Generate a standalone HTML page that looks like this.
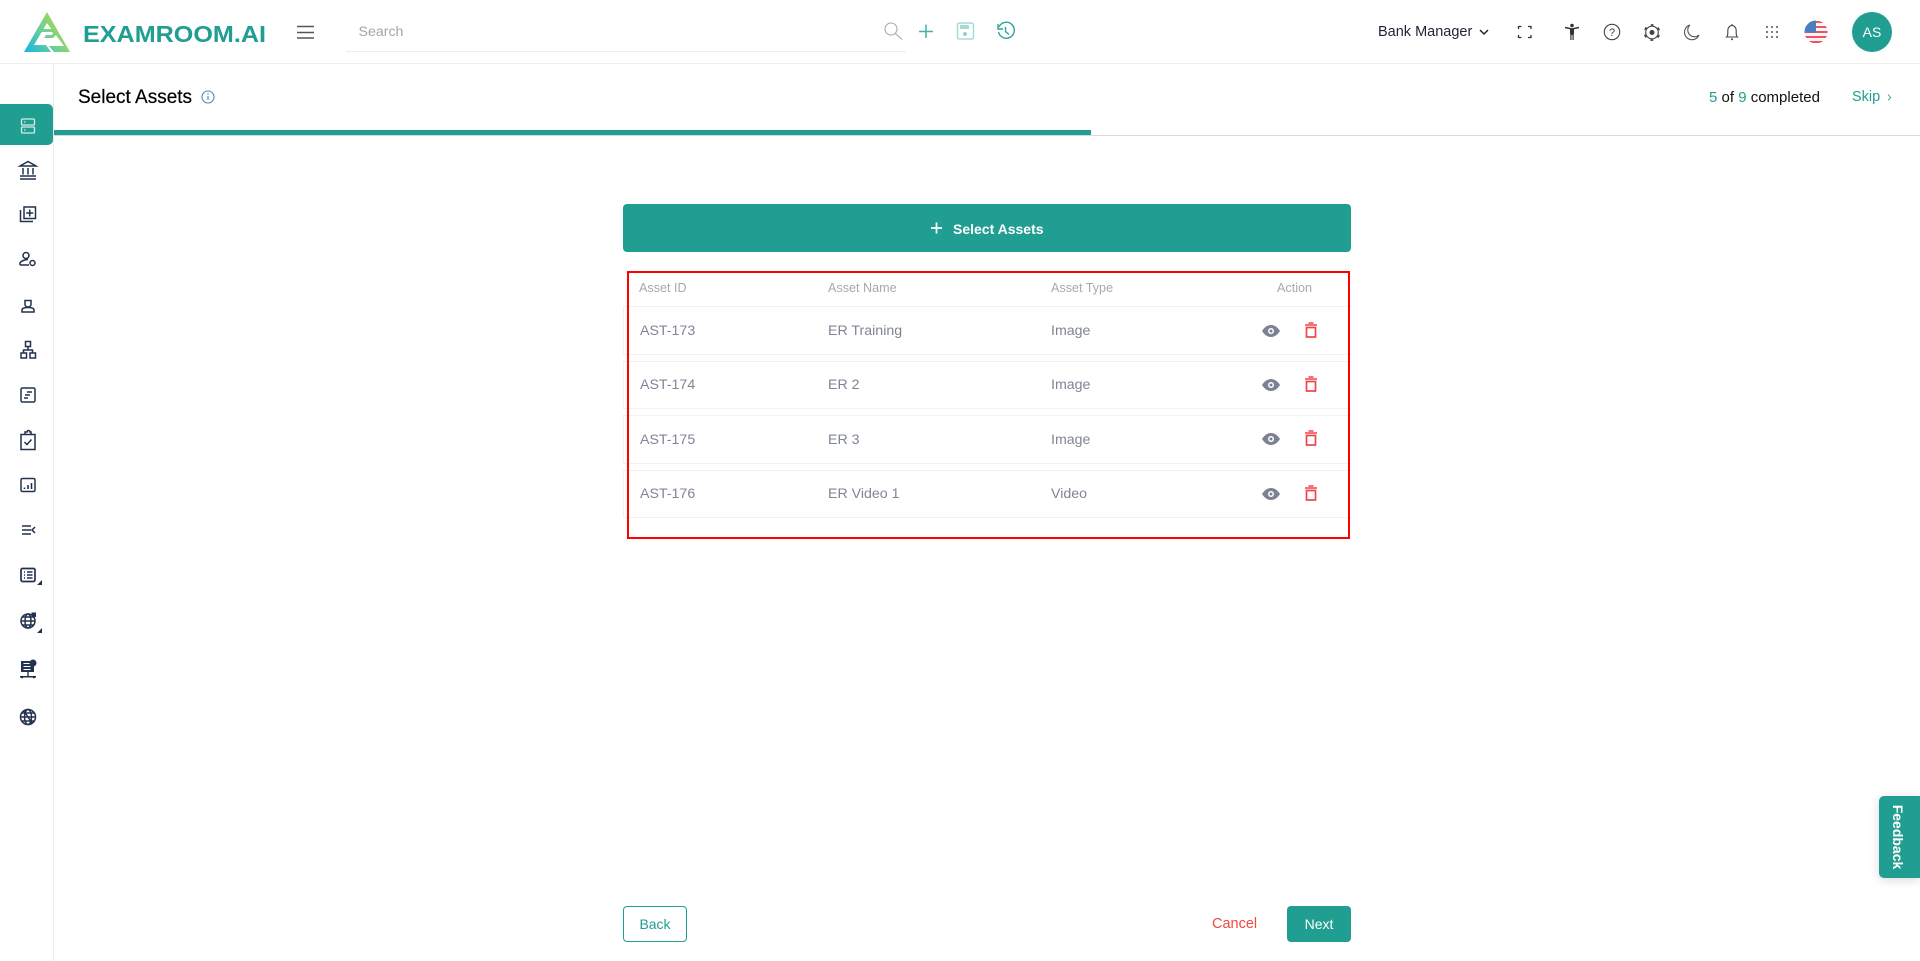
<!DOCTYPE html>
<html><head><meta charset="utf-8"><title>Select Assets</title>
<style>
html,body{margin:0;padding:0;background:#fff;width:1920px;height:961px;overflow:hidden}
body{font-family:"Liberation Sans",sans-serif;position:relative}
.t{position:absolute;white-space:nowrap;line-height:20px;height:20px}
.b{position:absolute;box-sizing:border-box}
.h{font-size:12.6px;color:#a8a8ad}
.c{font-size:14.2px;color:#808596}
.r{position:absolute;box-sizing:border-box;left:623px;width:728px;border:1px solid #f2f2f2;border-right:0}
svg{position:absolute;left:0;top:0}
</style></head><body>
<div class="b" style="left:0;top:63px;width:1920px;height:1px;background:#ececec"></div>
<div class="b" style="left:53px;top:64px;width:1px;height:897px;background:#ececec"></div>
<div class="b" style="left:0;top:104px;width:53px;height:41px;background:#209e91;border-radius:0 5px 5px 0"></div>
<div class="b" style="left:54px;top:135px;width:1866px;height:1px;background:#d9d9d9"></div>
<div class="b" style="left:54px;top:130px;width:1037px;height:5px;background:#209e91"></div>
<div class="b" style="left:346px;top:51px;width:560px;height:1px;background:#ececec"></div>

<div class="t" style="left:358.500px;top:22px;font-size:14.200px;color:#a3a5ad">Search</div>
<div class="t" style="left:1378px;top:22px;font-size:14.500px;color:#1d2433">Bank Manager</div>
<div class="b" style="left:1852px;top:12px;width:40px;height:40px;border-radius:50%;background:#209e91;color:#fff;font-size:14px;text-align:center;line-height:40px">AS</div>

<div class="t" style="left:78px;top:88px;font-size:19px;color:#000;-webkit-text-stroke:.2px #000">Select Assets</div>
<div class="t" style="left:1709px;top:88px;font-size:15px;color:#111"><span style="color:#209e91">5</span> of <span style="color:#209e91">9</span> completed</div>
<div class="t" style="left:1852px;top:87px;font-size:14.500px;color:#209e91">Skip</div>

<div class="b" style="left:623px;top:204px;width:728px;height:48px;background:#209e91;border-radius:4px"></div>
<div class="t" style="left:953px;top:219px;font-size:14px;font-weight:bold;color:#fff">Select Assets</div>

<div class="r" style="top:306px;height:49px"></div>
<div class="r" style="top:361px;height:48px"></div>
<div class="r" style="top:415px;height:49px"></div>
<div class="r" style="top:470px;height:48px"></div>
<div class="b" style="left:627px;top:271px;width:723px;height:268px;border:2px solid #f00"></div>

<div class="t h" style="left:639px;top:278px">Asset ID</div>
<div class="t h" style="left:828px;top:278px">Asset Name</div>
<div class="t h" style="left:1051px;top:278px">Asset Type</div>
<div class="t h" style="left:1277px;top:278px">Action</div>

<div class="t c" style="left:640px;top:321px">AST-173</div>
<div class="t c" style="left:828px;top:321px">ER Training</div>
<div class="t c" style="left:1051px;top:321px">Image</div>
<div class="t c" style="left:640px;top:375px">AST-174</div>
<div class="t c" style="left:828px;top:375px">ER 2</div>
<div class="t c" style="left:1051px;top:375px">Image</div>
<div class="t c" style="left:640px;top:430px">AST-175</div>
<div class="t c" style="left:828px;top:430px">ER 3</div>
<div class="t c" style="left:1051px;top:430px">Image</div>
<div class="t c" style="left:640px;top:484px">AST-176</div>
<div class="t c" style="left:828px;top:484px">ER Video 1</div>
<div class="t c" style="left:1051px;top:484px">Video</div>

<div class="b" style="left:623px;top:906px;width:64px;height:36px;border:1px solid #209e91;border-radius:4px;color:#209e91;font-size:14px;text-align:center;line-height:34px">Back</div>
<div class="t" style="left:1212px;top:914px;font-size:14.500px;color:#f0483e">Cancel</div>
<div class="b" style="left:1287px;top:906px;width:64px;height:36px;background:#209e91;border-radius:4px;color:#fff;font-size:14px;text-align:center;line-height:36px">Next</div>

<div class="b" style="left:1879px;top:796px;width:41px;height:82px;background:#209e91;border-radius:5px 0 0 5px;box-shadow:0 2px 10px rgba(0,0,0,.15)"></div>
<div class="t" style="left:1865px;top:827px;width:66px;text-align:center;font-size:14px;font-weight:bold;color:#fff;transform:rotate(90deg)">Feedback</div>

<svg width="1920" height="961" viewBox="0 0 1920 961" fill="none">
<defs>
<linearGradient id="lg" x1="24" y1="52" x2="70" y2="20" gradientUnits="userSpaceOnUse"><stop offset="0" stop-color="#12b5e5"/><stop offset=".5" stop-color="#6fcf97"/><stop offset="1" stop-color="#c5dd2d"/></linearGradient>
<clipPath id="fc"><circle cx="1816" cy="32" r="11.500"/></clipPath>
</defs>
<!-- logo -->
<path d="M47 12 70 52H24Z" fill="url(#lg)"/>
<path d="M47 23 34 45H46L51 52H54L49 46H64Z" fill="#fff"/>
<path d="M43 29H54L57 34 53 38H44L46 35H52L53 33.500 52 32H41.500Z" fill="url(#lg)"/>
<text x="83" y="42" font-family="Liberation Sans" font-weight="bold" font-size="23.500" fill="#209e91" textLength="183" lengthAdjust="spacingAndGlyphs">EXAMROOM.AI</text>
<!-- hamburger -->
<path d="M297 26.500H314M297 32.500H314M297 38H314" stroke="#555" stroke-width="1.600"/>
<!-- search -->
<circle cx="891" cy="29" r="6" stroke="#a9a9a9" stroke-width="1.100"/><path d="M895.500 33.500 902 39.500" stroke="#a9a9a9" stroke-width="1.100"/>
<path d="M926 24.500V38M919 31.500H933" stroke="#46b0a5" stroke-width="1.500"/>
<rect x="957.500" y="23" width="16" height="16" rx="2" stroke="#a6dcd6" stroke-width="1.500"/><rect x="960" y="25" width="9" height="4" fill="#a6dcd6"/><circle cx="965" cy="34" r="2" fill="#8fd3cb"/>
<path d="M999 27a8 8 0 1 1-.500 5" stroke="#2aa598" stroke-width="1.400"/><path d="M998 24v5h5" stroke="#2aa598" stroke-width="1.400"/><path d="M1005.500 27v4.500l3.500 3" stroke="#2aa598" stroke-width="1.400"/>
<!-- right toolbar -->
<path d="M1480 30l4 4 4-4" stroke="#1d2433" stroke-width="1.500"/>
<path d="M1518.500 29v-2.500h3M1528 26.500h3v2.500M1531 35v2.500h-3M1521.500 37.500h-3v-2.500" stroke="#333" stroke-width="1.300"/>
<circle cx="1572" cy="25.500" r="1.800" fill="#333"/><path d="M1565 27.500 1572 29 1579 27.500" stroke="#333" stroke-width="1.500"/><path d="M1570 29h4v5h-.300v6h-1.200v-5h-1v5h-1.200v-6h-.300z" fill="#333"/>
<circle cx="1612" cy="32" r="7.700" stroke="#444" stroke-width="1.100"/><text x="1612" y="36" text-anchor="middle" font-family="Liberation Sans" font-size="11" fill="#444">?</text>
<circle cx="1652" cy="32.500" r="6.300" stroke="#444" stroke-width="1.100"/>
<circle cx="1652" cy="32.500" r="7.600" stroke="#444" stroke-width="1.600" stroke-dasharray="3 4.960" stroke-dashoffset="1.500" transform="rotate(-90 1652 32.500)"/>
<circle cx="1652" cy="32.500" r="2.500" fill="#444"/>
<path d="M1690 25a7.500 7.500 0 1 0 9 10 6.500 6.500 0 0 1-9-10z" stroke="#555" stroke-width="1.100"/>
<path d="M1726.500 37c1.500-1.500 1.300-3 1.300-6.500a4.200 5 0 0 1 8.400 0c0 3.500-.200 5 1.300 6.500z" stroke="#444" stroke-width="1.100"/><path d="M1732 24v1.500" stroke="#444" stroke-width="1.100"/><circle cx="1732" cy="39.300" r="1" fill="#444"/>
<g fill="#555"><circle cx="1767" cy="27" r="1"/><circle cx="1772" cy="27" r="1"/><circle cx="1777" cy="27" r="1"/><circle cx="1767" cy="32" r="1"/><circle cx="1772" cy="32" r="1"/><circle cx="1777" cy="32" r="1"/><circle cx="1767" cy="37" r="1"/><circle cx="1772" cy="37" r="1"/><circle cx="1777" cy="37" r="1"/></g>
<g clip-path="url(#fc)"><rect x="1804" y="20" width="24" height="24" fill="#f5f5f5"/><path d="M1804 22h24M1804 27h24M1804 32h24M1804 37h24M1804 42h24" stroke="#ef5361" stroke-width="2"/><rect x="1804" y="20" width="12" height="12.500" fill="#4a7fc1"/></g>
<!-- info, skip chevron -->
<circle cx="208" cy="97" r="6" stroke="#5a7fb5" stroke-width="1.100"/><path d="M208 96v4M208 93.500v1.200" stroke="#5a7fb5" stroke-width="1.200"/>
<path d="M1888 94.500l2.700 3-2.700 3" stroke="#209e91" stroke-width=".9"/>
<!-- select assets plus -->
<path d="M936.500 222.500v11M931 228h11" stroke="#fff" stroke-width="1.700"/>
<!-- action icons: rows -->
<g>
<path d="M1262 331c2.500-4 5.500-6 9-6s6.500 2 9 6c-2.500 4-5.500 6-9 6s-6.500-2-9-6z" fill="#7d8194"/><circle cx="1271" cy="331" r="3" fill="#fff"/><circle cx="1271" cy="331" r="1.500" fill="#7d8194"/>
<path d="M1305 325h12M1308.500 323h5" stroke="#f0444a" stroke-width="1.500"/><rect x="1306.500" y="327.500" width="9" height="9.500" stroke="#f0444a" stroke-width="1.700"/>
</g>
<g transform="translate(0 54)">
<path d="M1262 331c2.500-4 5.500-6 9-6s6.500 2 9 6c-2.500 4-5.500 6-9 6s-6.500-2-9-6z" fill="#7d8194"/><circle cx="1271" cy="331" r="3" fill="#fff"/><circle cx="1271" cy="331" r="1.500" fill="#7d8194"/>
<path d="M1305 325h12M1308.500 323h5" stroke="#f0444a" stroke-width="1.500"/><rect x="1306.500" y="327.500" width="9" height="9.500" stroke="#f0444a" stroke-width="1.700"/>
</g>
<g transform="translate(0 108)">
<path d="M1262 331c2.500-4 5.500-6 9-6s6.500 2 9 6c-2.500 4-5.500 6-9 6s-6.500-2-9-6z" fill="#7d8194"/><circle cx="1271" cy="331" r="3" fill="#fff"/><circle cx="1271" cy="331" r="1.500" fill="#7d8194"/>
<path d="M1305 325h12M1308.500 323h5" stroke="#f0444a" stroke-width="1.500"/><rect x="1306.500" y="327.500" width="9" height="9.500" stroke="#f0444a" stroke-width="1.700"/>
</g>
<g transform="translate(0 163)">
<path d="M1262 331c2.500-4 5.500-6 9-6s6.500 2 9 6c-2.500 4-5.500 6-9 6s-6.500-2-9-6z" fill="#7d8194"/><circle cx="1271" cy="331" r="3" fill="#fff"/><circle cx="1271" cy="331" r="1.500" fill="#7d8194"/>
<path d="M1305 325h12M1308.500 323h5" stroke="#f0444a" stroke-width="1.500"/><rect x="1306.500" y="327.500" width="9" height="9.500" stroke="#f0444a" stroke-width="1.700"/>
</g>
<!-- sidebar -->
<g stroke="#d3ece9" stroke-width="1.300"><rect x="21.500" y="119" width="13" height="6" rx="1"/><rect x="21.500" y="127" width="13" height="6" rx="1"/><path d="M24 122h1.500M24 130h1.500"/></g>
<g stroke="#22324f" stroke-width="1.500">
<path d="M20 166 28 161.500 36 166H20ZM20 176h16M20 179h16M23 168v6.500M28 168v6.500M33 168v6.500"/>
<path d="M24 207h11.500v11.500H24zM20.500 210v11.500H33M29.700 209.500v7M26.200 213h7"/>
<circle cx="26" cy="255.500" r="3"/><path d="M20 265v-2c1-2 5-3.500 8-3.500M20 265h9"/><circle cx="32.500" cy="263" r="2.500"/>
<path d="M25 300.500h6v4c0 1.500-1.500 2.500-3 2.500s-3-1-3-2.500zM22 312v-2c0-1.500 2-2.500 6-2.500s6 1 6 2.500v2z"/>
<rect x="25.500" y="341.500" width="5" height="5"/><rect x="21" y="353" width="5.500" height="5"/><rect x="30" y="353" width="5.500" height="5"/><path d="M28 346.500v3.500M23.500 353v-3h9v3"/>
<rect x="21" y="388" width="14" height="14" rx="1.500"/><path d="M27 392h5M25 395h5M24 398h4"/>
<path d="M21 434.500h14v15H21zM25 434.500v-2.500h2a1.500 1.500 0 0 1 3 0h1v2.500zM24.500 442l2.500 2.500 4.500-5"/>
<rect x="21" y="478.500" width="14" height="13" rx="1.500"/><path d="M24.500 489v-1.500M28 489v-4M31.500 489v-6" stroke-width="1.600"/>
<path d="M22 526h9M22 530h9M22 534h9M35 527l-3 3 3 3"/>
<rect x="21" y="568.500" width="14" height="13" rx="1.500" stroke-width="1.700"/><path d="M24 572h1M24 575h1M24 578h1M27 572h5.500M27 575h5.500M27 578h5.500"/>
<circle cx="28" cy="621" r="7"/><ellipse cx="28" cy="621" rx="3" ry="7"/><path d="M21 621h14M22 617h12M22 625h12"/>
<circle cx="28" cy="717" r="7.500"/><ellipse cx="28" cy="717" rx="3.500" ry="7.500"/><path d="M20.500 717h15M21.500 713h13M21.500 721h13M24 711l8 12"/>
</g>
<rect x="31.500" y="612.500" width="4.500" height="4.500" fill="#22324f"/>
<path d="M42 580v5h-5zM42 628v5h-5z" fill="#22324f"/>
<g fill="#22324f"><path d="M21 661h13v11H21z"/><path d="M23.500 663.500h7M23.500 666.500h7M23.500 669.500h7" stroke="#fff" stroke-width="1"/><circle cx="33" cy="663" r="3.500"/><path d="M20 676h16v1.500H20zM27.300 672h1.400v4h-1.400z"/><circle cx="22" cy="677" r="1.300"/><circle cx="34" cy="677" r="1.300"/></g>
</svg>
</body></html>
